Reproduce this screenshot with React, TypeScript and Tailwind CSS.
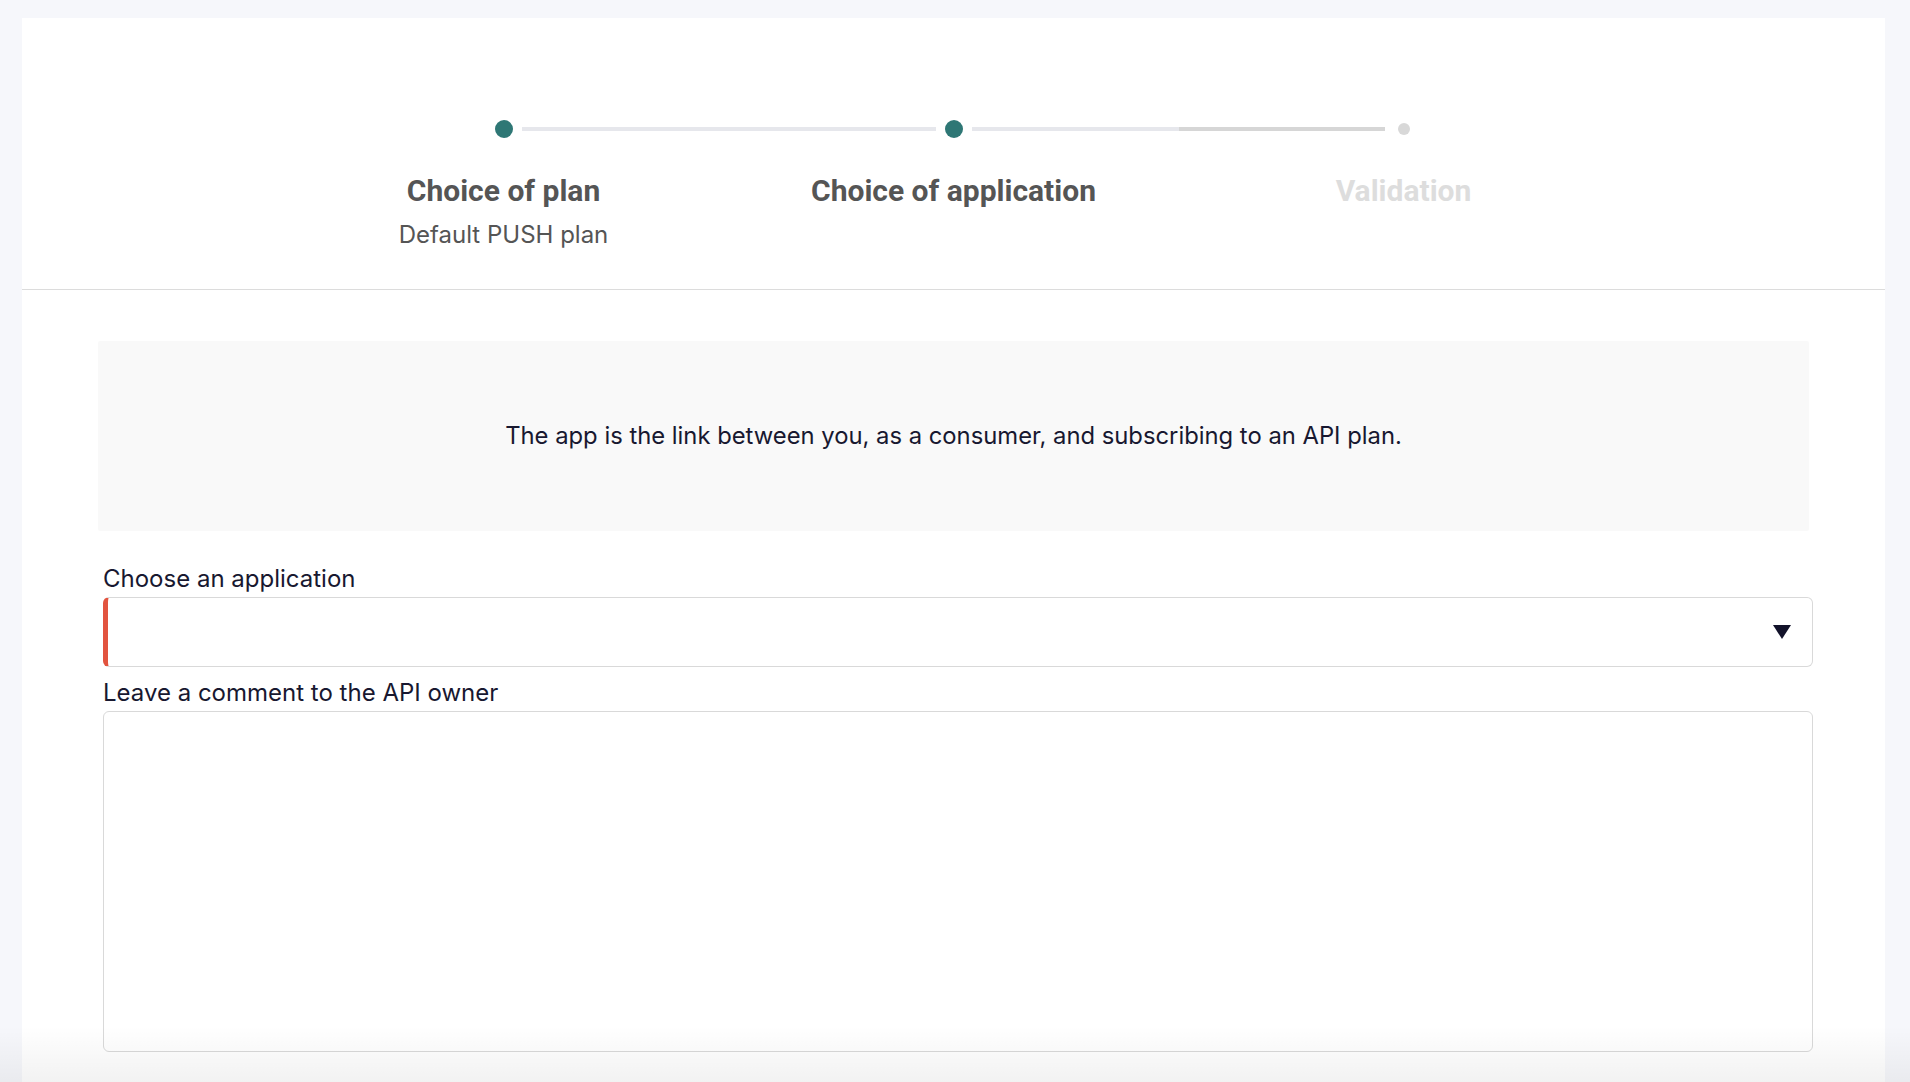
/**
 * App.tsx — subscription wizard, step 2 (choice of application).
 *
 * Stepper header on top, then an info box and the application form.
 */

type StepState = 'done' | 'current' | 'todo';

interface Step {
  title: string;
  subtitle?: string;
  state: StepState;
}

const steps: Step[] = [
  { title: 'Choice of plan', subtitle: 'Default PUSH plan', state: 'done' },
  { title: 'Choice of application', state: 'current' },
  { title: 'Validation', state: 'todo' },
];

export default function App() {
  return (
    <div className="relative h-[1082px] overflow-hidden bg-[#f6f7fb] pt-[18px] pl-[22px] pr-[25px] font-['Inter',sans-serif] text-[#181830]">
      <div className="h-full bg-white">
        {/* ── Stepper ─────────────────────────────────────────────── */}
        <div className="h-[272px] border-b border-[#dcdcdc] pt-[102px]">
          <div className="mx-auto grid w-[1350px] grid-cols-3">
            {steps.map((step, i) => (
              <StepColumn key={step.title} step={step} first={i === 0} last={i === steps.length - 1} />
            ))}
          </div>
        </div>

        {/* ── Form ────────────────────────────────────────────────── */}
        <div className="pl-[81px] pr-[72px] pt-[51px]">
          <div className="-ml-[5px] mr-[4px] flex h-[190px] items-center justify-center rounded-[2px] bg-[#f9f9f9]">
            <p className="text-[23.8px] leading-[30px]">
              The app is the link between you, as a consumer, and subscribing to an API plan.
            </p>
          </div>

          <label className="mt-[33px] block text-[24px] leading-[30px]">Choose an application</label>
          <div className="mt-[3px] flex h-[70px] items-center justify-end rounded-[6px] border border-l-[5px] border-[#d9d9d9] border-l-[#e2543f] pr-[21px]">
            <svg width="18" height="14" viewBox="0 0 18 14" aria-hidden="true">
              <polygon points="0,0 18,0 9,14" fill="#12122a" />
            </svg>
          </div>

          <label className="mt-[11px] block text-[24px] leading-[30px]">Leave a comment to the API owner</label>
          <div className="mt-[3px] h-[341px] rounded-[6px] border border-[#d9d9d9]" />
        </div>
      </div>

      {/* bottom fade over the page */}
      <div className="pointer-events-none absolute inset-x-0 bottom-0 h-[56px] bg-gradient-to-b from-transparent to-[rgba(0,0,0,0.05)]" />
    </div>
  );
}

function StepColumn({ step, first, last }: { step: Step; first: boolean; last: boolean }) {
  const isTodo = step.state === 'todo';
  // left half of a column is darker grey when leading to an unreached step
  const leftLine = first ? 'bg-transparent' : isTodo ? 'bg-[#d6d6d6]' : 'bg-[#e6e7ec]';
  const rightLine = last ? 'bg-transparent' : 'bg-[#e6e7ec]';

  return (
    <div className="flex flex-col items-center">
      <div className="flex h-[18px] w-full items-center">
        <div className={`h-[4px] flex-1 ${leftLine} ${isTodo ? 'mr-[13px]' : 'mr-[9px]'}`} />
        {isTodo ? (
          <div className="h-[12px] w-[12px] rounded-full bg-[#d8d8d8]" />
        ) : (
          <div className="h-[18px] w-[18px] rounded-full bg-[#2e7775]" />
        )}
        <div className={`h-[4px] flex-1 ${rightLine} ${isTodo ? 'ml-[13px]' : 'ml-[9px]'}`} />
      </div>
      <div
        className={`mt-[35px] font-['Roboto',sans-serif] text-[30px] font-bold leading-[36px] ${
          isTodo ? 'text-[#dddddd]' : 'text-[#555555]'
        }`}
      >
        {step.title}
      </div>
      {step.subtitle && (
        <div className="mt-[11px] text-[24px] leading-[30px] text-[#555555]">{step.subtitle}</div>
      )}
    </div>
  );
}
